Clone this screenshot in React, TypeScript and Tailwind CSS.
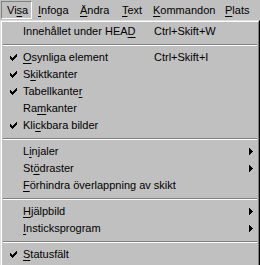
import React from "react";

type Item =
  | { sep: true }
  | {
      sep?: false;
      pre: string;
      acc: string;
      post: string;
      check?: boolean;
      key?: string;
      sub?: boolean;
    };

const items: Item[] = [
  { pre: "Innehållet under HEA", acc: "D", post: "", key: "Ctrl+Skift+W" },
  { sep: true },
  { pre: "", acc: "O", post: "synliga element", check: true, key: "Ctrl+Skift+I" },
  { pre: "S", acc: "k", post: "iktkanter", check: true },
  { pre: "Tabellkante", acc: "r", post: "", check: true },
  { pre: "Ra", acc: "m", post: "kanter" },
  { pre: "Kli", acc: "c", post: "kbara bilder", check: true },
  { sep: true },
  { pre: "L", acc: "i", post: "njaler", sub: true },
  { pre: "St", acc: "ö", post: "draster", sub: true },
  { pre: "", acc: "F", post: "örhindra överlappning av skikt" },
  { sep: true },
  { pre: "", acc: "H", post: "jälpbild", sub: true },
  { pre: "", acc: "I", post: "nsticksprogram", sub: true },
  { sep: true },
  { pre: "", acc: "S", post: "tatusfält", check: true },
];

// widths picked so the labels land where the reference has them
const menus = [
  { pre: "Vi", acc: "s", post: "a", w: "w-[31px]" },
  { pre: "", acc: "I", post: "nfoga", w: "w-[42px]" },
  { pre: "", acc: "Ä", post: "ndra", w: "w-[42px]" },
  { pre: "", acc: "T", post: "ext", w: "w-[31px]" },
  { pre: "", acc: "K", post: "ommandon", w: "w-[72px]" },
  { pre: "", acc: "P", post: "lats", w: "w-[38px]" },
];

// classic 7x7 pixel check mark
const Check = () => (
  <svg width="7" height="7" viewBox="0 0 7 7" className="block" shapeRendering="crispEdges">
    <path
      d="M6 0h1v1H6z M5 1h2v1H5z M0 2h1v1H0z M4 2h3v1H4z M0 3h2v1H0z M3 3h3v1H3z M0 4h5v1H0z M1 5h3v1H1z M2 6h1v1H2z"
      fill="#000"
    />
  </svg>
);

const Arrow = () => (
  <svg width="4" height="7" viewBox="0 0 4 7" className="block" shapeRendering="crispEdges">
    <path d="M0 0L4 3.5L0 7Z" fill="#000" />
  </svg>
);

const Label = ({ pre, acc, post }: { pre: string; acc: string; post: string }) => (
  <span className="whitespace-pre">
    {pre}
    <span className="underline underline-offset-[2px] decoration-1">{acc}</span>
    {post}
  </span>
);

export default function App() {
  return (
    <div
      className="w-[260px] h-[265px] overflow-hidden bg-[#c0c0c0] text-black text-[11px] leading-none"
      style={{ fontFamily: '"Liberation Sans", Arial, sans-serif' }}
    >
      <div className="flex h-[20px] items-start pt-[1px] pl-[1px]">
        {menus.map((m, i) => (
          <div
            key={i}
            className={`${m.w} shrink-0 h-[18px] flex items-center pl-[5px] border ${
              i === 0
                ? "border-t-[#808080] border-l-[#808080] border-r-white border-b-white"
                : "border-transparent"
            }`}
          >
            <Label pre={m.pre} acc={m.acc} post={m.post} />
          </div>
        ))}
      </div>
      <div className="w-[260px] border border-t-[#dfdfdf] border-l-[#dfdfdf] border-r-black border-b-black">
        <div className="border border-t-white border-l-white border-r-[#808080] border-b-[#808080] pt-[1px] pb-[2px]">
          {items.map((it, i) =>
            it.sep ? (
              <div key={i} className="h-[9px] flex flex-col justify-center px-[1px]">
                <div className="h-px bg-[#808080]" />
                <div className="h-px bg-white" />
              </div>
            ) : (
              <div key={i} className="h-[17px] flex items-center relative">
                <div className="w-[21px] flex justify-center pl-[2px]">{it.check && <Check />}</div>
                <div className="w-[131px]">
                  <Label pre={it.pre} acc={it.acc} post={it.post} />
                </div>
                <div className="flex-1">{it.key}</div>
                {it.sub && (
                  <div className="absolute right-[5px] top-[5px]">
                    <Arrow />
                  </div>
                )}
              </div>
            )
          )}
        </div>
      </div>
    </div>
  );
}
